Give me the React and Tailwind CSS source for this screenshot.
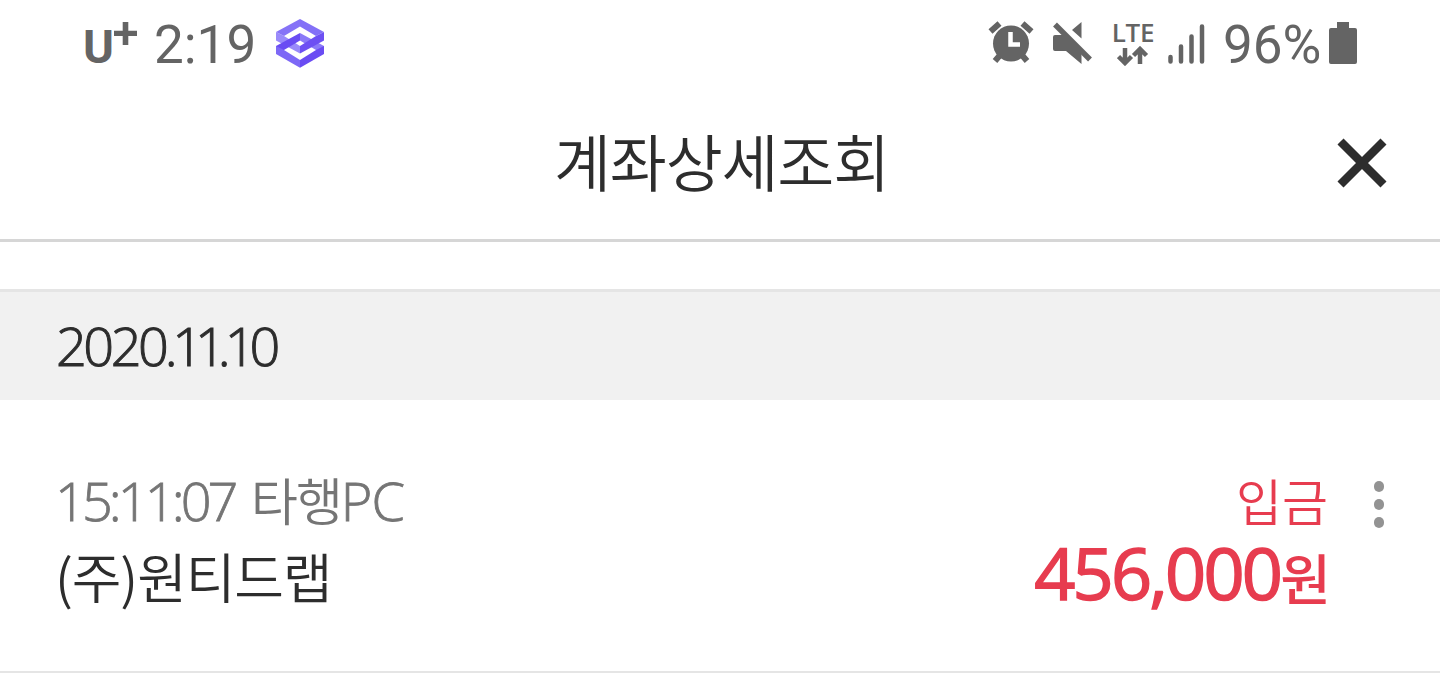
import React from 'react'

const CarrierLogo = () => {
  return (
    <div className="flex h-[60px] w-[56px] text-[#646464]">
      <span className="w-[31px] pt-[4px] font-[Roboto,sans-serif] text-[47px] leading-[56px] font-bold">
        U
      </span>
      <svg viewBox="0 0 23 23" className="mt-[7px] size-[23px]" fill="currentColor">
        <path d="M8.700 0h5.600v8.700H23v5.200h-8.700V23H8.700v-9.100H0V8.700h8.700z" />
      </svg>
    </div>
  )
}

const AppBadge = () => {
  return (
    <svg viewBox="0 0 48 49" className="mt-[4px] h-[49px] w-[48px]">
      <path d="M24 14 48 27v8l-8-4-16-9.500z" fill="#8b7af8" />
      <path d="M0 13l8 4 16 10v7.500L0 21.500z" fill="#9a8afa" />
      <path d="M0 13 24 0v7.500L8 17z" fill="#8673f7" />
      <path d="M24 0 48 13l-8 4-16-9.500z" fill="#8370f7" />
      <path d="M48 13v8.500L24 34.500V27l16-10z" fill="#6d50f3" />
      <path d="M24 14v7.500L8 31l-8 4v-8z" fill="#6a4cf3" />
      <path d="M0 27l8 4 16 10v7.700L0 35z" fill="#7d68f6" />
      <path d="M48 27v8L24 48.700V41l16-10z" fill="#6a4cf3" />
    </svg>
  )
}

const AlarmIcon = () => {
  return (
    <svg viewBox="0 0 46 44" className="h-[44px] w-[46px]" fill="none">
      <path d="M7 40l6-7M39 40l-6-7M2.500 10.500l9-8M43.500 10.500l-9-8" stroke="#646464" strokeWidth="6" />
      <circle cx="23" cy="22.500" r="18" fill="#646464" />
      <path d="M22.500 11v12.500H32" stroke="#fff" strokeWidth="4.500" />
    </svg>
  )
}

const MuteIcon = () => {
  return (
    <svg viewBox="0 0 40 42" className="h-[42px] w-[40px]" fill="#646464">
      <path d="M28.500 0v16.500L19 8zM2 13h10l16.500 16v13L13 29H2q-2 0-2-2V15q0-2 2-2z" />
      <path d="M2 2.500 37 37.500" stroke="#646464" strokeWidth="5.500" />
    </svg>
  )
}

const LteIcon = () => {
  return (
    <div className="flex w-[42px] flex-col items-center">
      <span className="font-['Open_Sans',sans-serif] text-[26px] leading-[24px] font-semibold tracking-[-0.2px]">
        LTE
      </span>
      <svg viewBox="0 0 32 20" className="mt-[2px] h-[20px] w-[32px]" fill="none" stroke="currentColor" strokeWidth="4.500">
        <path d="M8 2v14M1.500 10.500 8 17l6.500-6.500M23 18V4M16.500 9.500 23 3l6.500 6.500" />
      </svg>
    </div>
  )
}

const SignalIcon = () => {
  return (
    <svg viewBox="0 0 37 40" className="h-[40px] w-[37px]" stroke="#646464" strokeWidth="4.500" strokeLinecap="round">
      <path d="M2.500 33v4.500M13 22.500v15M23.500 12.500v25M34 2.500v35" />
    </svg>
  )
}

const BatteryIcon = () => {
  return (
    <svg viewBox="0 0 28 42" className="h-[42px] w-[28px]" fill="#646464">
      <path d="M8 0h12v6h6q2 0 2 2v32q0 2-2 2H2q-2 0-2-2V8q0-2 2-2h6z" />
    </svg>
  )
}

const StatusBar = () => {
  return (
    <div className="flex h-[88px] justify-between pt-[15px] pr-[83px] pl-[83px] text-[#646464]">
      <div className="flex">
        <CarrierLogo />
        <span className="ml-[15px] w-[106px] font-[Roboto,sans-serif] text-[53px] leading-[60px]">2:19</span>
        <span className="ml-[16px]">
          <AppBadge />
        </span>
      </div>
      <div className="flex">
        <div className="mt-[6px]">
          <AlarmIcon />
        </div>
        <div className="mt-[7px] ml-[19px]">
          <MuteIcon />
        </div>
        <div className="mt-[5px] ml-[19px]">
          <LteIcon />
        </div>
        <div className="mt-[9px] ml-[14px]">
          <SignalIcon />
        </div>
        <span className="ml-[18px] w-[102px] font-[Roboto,sans-serif] text-[53px] leading-[60px]">96%</span>
        <div className="mt-[7px] ml-[4px]">
          <BatteryIcon />
        </div>
      </div>
    </div>
  )
}

const Header = () => {
  return (
    <div className="grid h-[154px] grid-cols-[1fr_auto_1fr] border-b-3 border-[#d6d6d6] text-[#2d2d2d]">
      <h1 className="col-start-2 pt-[29px] pl-[3px] font-['Noto_Sans_CJK_KR',sans-serif] text-[62px] leading-[87px] font-[350] tracking-[-1.200px] whitespace-nowrap">
        계좌상세조회
      </h1>
      <button className="mt-[50px] mr-[53px] size-[50px] justify-self-end">
        <svg viewBox="0 0 50 50" className="size-[50px]" stroke="currentColor" strokeWidth="8.500">
          <path d="M3.500 3.500l43 43M46.500 3.500l-43 43" />
        </svg>
      </button>
    </div>
  )
}

const DateBar = () => {
  return (
    <div className="mt-[47px] h-[111px] border-t-3 border-[#e5e5e5] bg-[#f1f1f1] pl-[56px] font-['Open_Sans',sans-serif] text-[54px] leading-[106px] font-light tracking-[-3.500px] text-[#2d2d2d] [-webkit-text-stroke:1px]">
      202<span className="tracking-[-4px]">0</span>
      <span className="tracking-[-5.500px]">.</span>
      <span className="tracking-[-8px]">11</span>
      <span className="tracking-[-6px]">.</span>
      <span className="tracking-[-6px]">1</span>0
    </div>
  )
}

const Transaction = () => {
  return (
    <div className="flex h-[273px] justify-between border-b-2 border-[#e5e5e5] pt-[65px] pr-[56px] pl-[55px]">
      <div className="whitespace-nowrap">
        <p className="flex h-[72px] font-['Open_Sans',sans-serif] text-[54px] leading-[71px] font-light text-[#757575]">
          <span className="w-[196px] tracking-[-3.900px] [-webkit-text-stroke:0.8px]">15:11:07</span>
          <span className="font-['Noto_Sans_CJK_KR',sans-serif] text-[51px] leading-[69px] font-[350] tracking-[-2px]">
            타행
          </span>
          <span className="tracking-[-1px] [-webkit-text-stroke:0.8px]">PC</span>
        </p>
        <p className="h-[82px] font-['Noto_Sans_CJK_KR',sans-serif] text-[54px] leading-[77px] font-[350] tracking-[-1.100px] text-[#2d2d2d]">
          (주)원티드랩
        </p>
      </div>
      <div className="flex">
        <div className="text-right whitespace-nowrap text-[#e73c4f]">
          <p className="h-[72px] font-['Noto_Sans_CJK_KR',sans-serif] text-[50px] leading-[69px] font-[350]">입금</p>
          <p className="h-[82px] font-['Open_Sans',sans-serif] text-[72px] leading-[71px] tracking-[-2.800px]">
            <span className="[-webkit-text-stroke:1.500px]">456,000</span>
            <span className="font-['Noto_Sans_CJK_KR',sans-serif] text-[55px] leading-[50px] font-medium">원</span>
          </p>
        </div>
        <div className="mt-[16px] ml-[46px] flex flex-col gap-[7px]">
          <span className="h-[11px] w-[10px] rounded-full bg-[#939393]"></span>
          <span className="h-[11px] w-[10px] rounded-full bg-[#939393]"></span>
          <span className="h-[11px] w-[10px] rounded-full bg-[#939393]"></span>
        </div>
      </div>
    </div>
  )
}

const App = () => {
  return (
    <div className="h-[673px] w-[1440px] overflow-hidden bg-white">
      <StatusBar />
      <Header />
      <DateBar />
      <Transaction />
    </div>
  )
}

export default App
